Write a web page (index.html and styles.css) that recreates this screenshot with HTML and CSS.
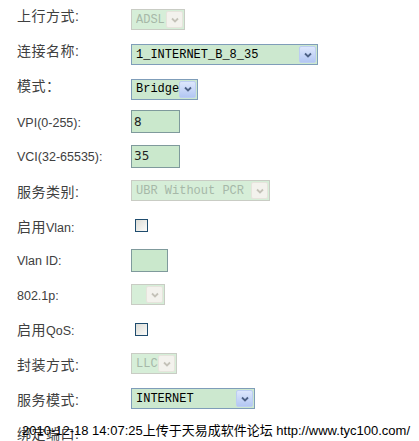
FILE: index.html
```html
<!DOCTYPE html>
<html lang="zh-CN">
<head>
  <meta charset="UTF-8" />
  <title>WAN 设置</title>
  <link rel="stylesheet" href="styles.css">
</head>
<body>
  <div class="wan-form">
    <div class="row top">
      <label class="lbl">上行方式:</label>
      <div class="select off w-adsl"><span class="val">ADSL</span><span class="btn"><svg width="8" height="6" viewBox="0 0 8 6"><path d="M1 1.5 L4 4.5 L7 1.5" /></svg></span></div>
    </div>
    <div class="row top">
      <label class="lbl">连接名称:</label>
      <div class="select w-conn"><span class="val">1_INTERNET_B_8_35</span><span class="btn"><svg width="8" height="6" viewBox="0 0 8 6"><path d="M1 1.5 L4 4.5 L7 1.5" /></svg></span></div>
    </div>
    <div class="row top">
      <label class="lbl">模式：</label>
      <div class="select w-mode"><span class="val">Bridge</span><span class="btn"><svg width="8" height="6" viewBox="0 0 8 6"><path d="M1 1.5 L4 4.5 L7 1.5" /></svg></span></div>
    </div>
    <div class="row">
      <label class="lbl"><span class="en">VPI(0-255):</span></label>
      <input class="field" type="text" value="8">
    </div>
    <div class="row">
      <label class="lbl"><span class="en">VCI(32-65535):</span></label>
      <input class="field" type="text" value="35">
    </div>
    <div class="row">
      <label class="lbl">服务类别:</label>
      <div class="select off w-ubr"><span class="val">UBR Without PCR</span><span class="btn"><svg width="8" height="6" viewBox="0 0 8 6"><path d="M1 1.5 L4 4.5 L7 1.5" /></svg></span></div>
    </div>
    <div class="row">
      <label class="lbl">启用<span class="en">Vlan:</span></label>
      <input class="check" type="checkbox">
    </div>
    <div class="row">
      <label class="lbl"><span class="en">Vlan ID:</span></label>
      <input class="field small" type="text" value="">
    </div>
    <div class="row">
      <label class="lbl"><span class="en">802.1p:</span></label>
      <div class="select off w-prio"><span class="val"></span><span class="btn"><svg width="8" height="6" viewBox="0 0 8 6"><path d="M1 1.5 L4 4.5 L7 1.5" /></svg></span></div>
    </div>
    <div class="row">
      <label class="lbl">启用<span class="en">QoS:</span></label>
      <input class="check" type="checkbox">
    </div>
    <div class="row">
      <label class="lbl">封装方式:</label>
      <div class="select off w-llc"><span class="val">LLC</span><span class="btn"><svg width="8" height="6" viewBox="0 0 8 6"><path d="M1 1.5 L4 4.5 L7 1.5" /></svg></span></div>
    </div>
    <div class="row">
      <label class="lbl">服务模式:</label>
      <div class="select w-svc"><span class="val">INTERNET</span><span class="btn"><svg width="8" height="6" viewBox="0 0 8 6"><path d="M1 1.5 L4 4.5 L7 1.5" /></svg></span></div>
    </div>
    <div class="row">
      <label class="lbl">绑定端口:</label>
    </div>
  </div>

  <!-- forum upload stamp printed over the picture -->
  <div class="stamp">2010-12-18 14:07:25上传于天易成软件论坛 http://www.tyc100.com/</div>
</body>
</html>
```

FILE: styles.css
```css
body {
  margin: 0;
  background: #fff;
  font-family: "Liberation Sans", "Noto Sans CJK SC", sans-serif;
  color: #3a3a3a;
  overflow: hidden;
}
.wan-form {
  padding: 0.7px 0 0 17px;
}
.row {
  height: 34.6px;
  display: flex;
  align-items: center;
}
.lbl {
  width: 114px;
  flex: none;
  font-size: 14px;
  letter-spacing: 0.5px;
  color: #404040;
}
.lbl .en {
  font-size: 12.5px;
  letter-spacing: 0;
}
.row.top .lbl {
  margin-bottom: 5px;
}
.row.top .select {
  margin-top: 4px;
}

/* xp style drop down */
.select {
  display: flex;
  align-items: center;
  box-sizing: border-box;
  height: 21px;
  border: 1px solid #7f9db9;
  background: #cce8cf;
  padding-left: 4px;
  font: 12px "Liberation Mono", monospace;
  color: #000;
}
.select .val {
  flex: 1;
  white-space: nowrap;
  overflow: hidden;
}
.select .btn {
  width: 15px;
  height: 15px;
  margin-right: 1px;
  border: 1px solid #bccdf2;
  border-radius: 2px;
  background: linear-gradient(#dde7fc, #b3c7f3);
  display: flex;
  align-items: center;
  justify-content: center;
}
.select .btn svg path {
  fill: none;
  stroke: #4d6185;
  stroke-width: 1.8;
}
.select.off {
  border-color: #c9ccc4;
  background: #d6eed8;
  color: #a6b8a8;
}
.select.off .btn {
  border-color: #e6e4dc;
  background: #f3f2ed;
}
.select.off .btn svg path {
  stroke: #c4c2b8;
}
.w-adsl { width: 54px; }
.w-conn { width: 187px; }
.w-mode { width: 67px; }
.w-ubr { width: 139px; }
.w-prio { width: 34px; }
.w-llc { width: 46px; }
.w-svc { width: 124px; }

.field {
  box-sizing: border-box;
  width: 49px;
  height: 23px;
  margin: 0;
  padding: 0 2px;
  border: 1px solid #7f9a9c;
  background: #cae8cc;
  font: 12px "DejaVu Sans", sans-serif;
  color: #222;
  outline: none;
}
.field.small {
  width: 37px;
}
.check {
  appearance: none;
  box-sizing: border-box;
  width: 13px;
  height: 13px;
  margin: 0 0 0 4px;
  border: 1px solid #1f4c6e;
  background: linear-gradient(135deg, #dcdcd6, #fbfbf9);
}

.stamp {
  position: absolute;
  left: 22px;
  top: 420px;
  font-size: 13px;
  color: #000;
  white-space: nowrap;
}
```
